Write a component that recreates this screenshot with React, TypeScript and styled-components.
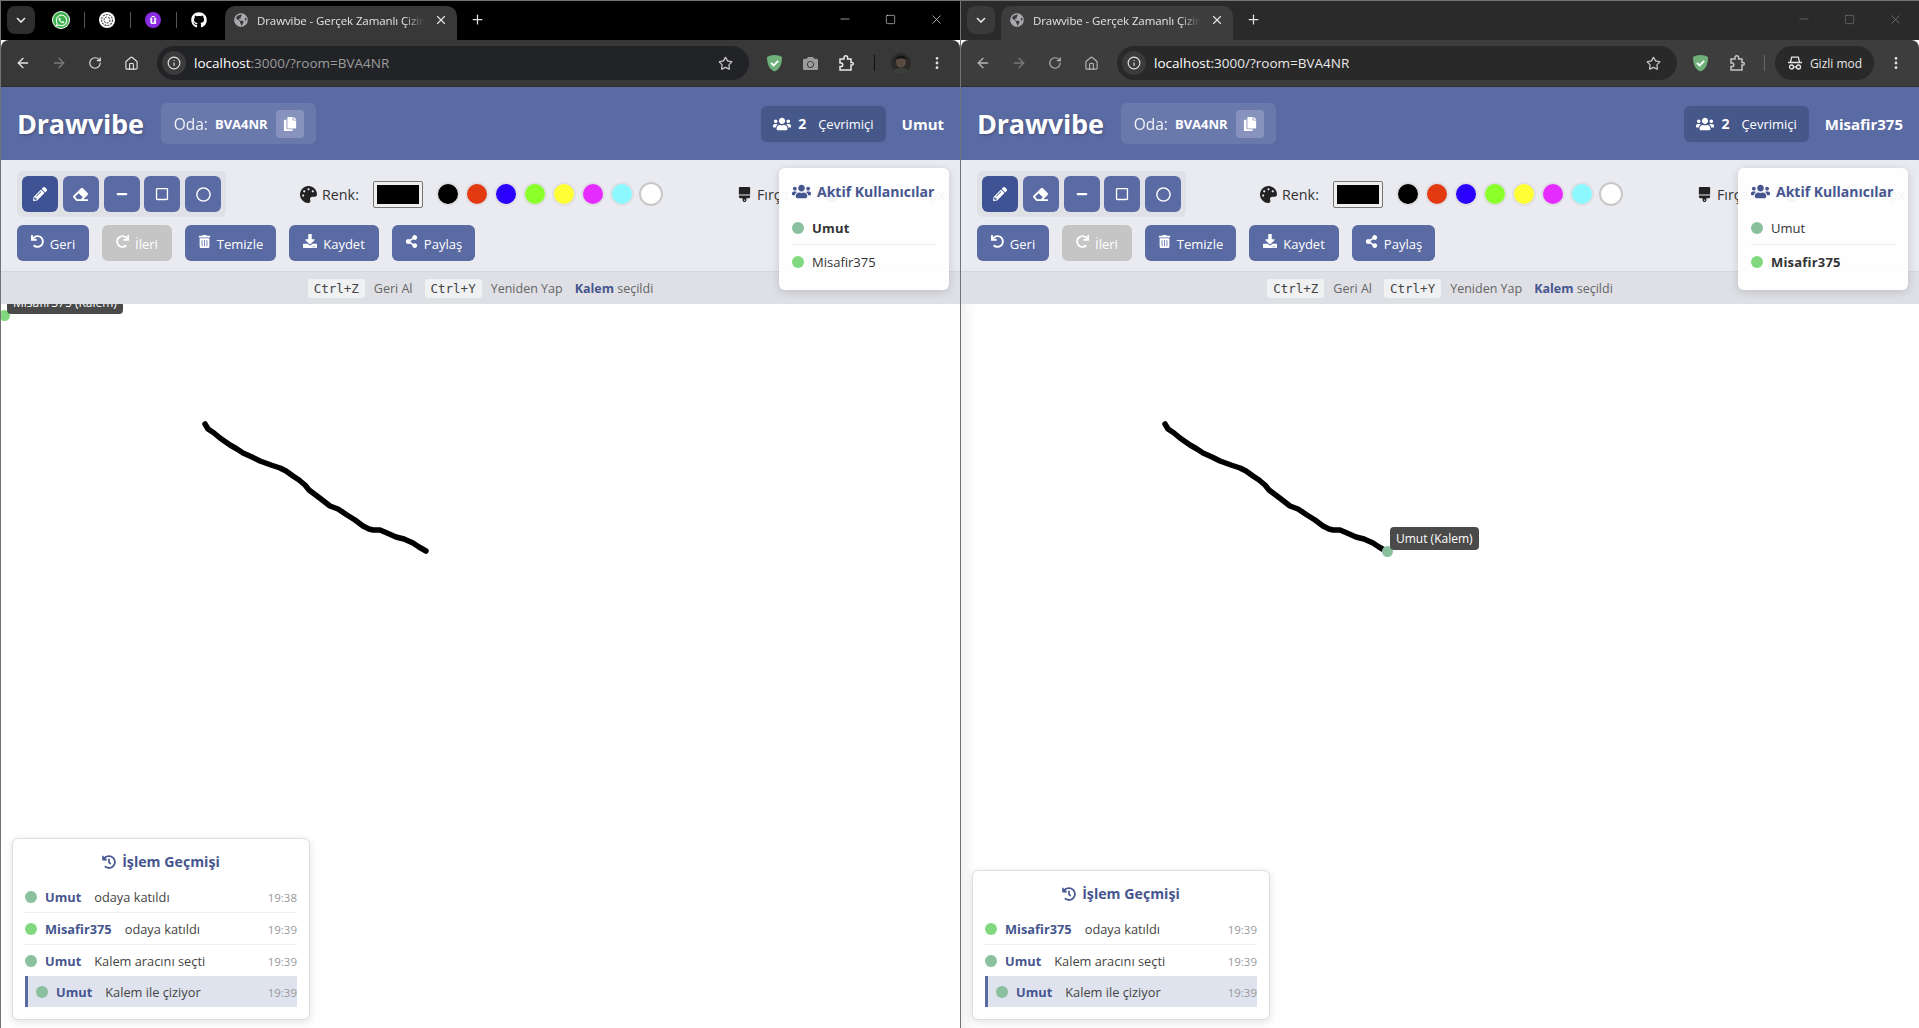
import { ReactNode } from "react";
import styled, { createGlobalStyle } from "styled-components";
import {
  FaBrush,
  FaCamera,
  FaCopy,
  FaDownload,
  FaEraser,
  FaGithub,
  FaGlobeAmericas,
  FaHistory,
  FaMinus,
  FaPalette,
  FaPencilAlt,
  FaRedo,
  FaRegCircle,
  FaRegSquare,
  FaShareAlt,
  FaTrashAlt,
  FaUndo,
  FaUsers,
  FaWhatsapp,
} from "react-icons/fa";
import { ArrowLeft, ArrowRight, EllipsisVertical, House, Info, Minus, Plus, RotateCw, Square, Star, X } from "lucide-react";

const UMUT = "#8bc09f";
const MISAFIR = "#80d97f";
const BLUE = "#5a6aa3";
const DARK_BLUE = "#46568f";
const UI_FONT = `"Open Sans", "Noto Sans", sans-serif`;

const SWATCHES = ["#000000", "#e43a12", "#2b00ff", "#8aff29", "#ffff33", "#e62bff", "#8cf8ff", "#ffffff"];

const STROKE =
  "204,120 207,125 213,129 219,134 229,141 236,145 242,149 251,153 259,157 270,161 279,164 285,167 292,172 298,176 304,181 308,186 312,189 320,195 329,202 337,205 346,211 354,216 362,222 368,225 372,226 379,226 386,229 395,233 403,235 412,239 418,243 425,247";

type LogItem = { who: string; what: string; time: string; current?: boolean };

const LEFT_LOG: LogItem[] = [
  { who: "Umut", what: "odaya katıldı", time: "19:38" },
  { who: "Misafir375", what: "odaya katıldı", time: "19:39" },
  { who: "Umut", what: "Kalem aracını seçti", time: "19:39" },
  { who: "Umut", what: "Kalem ile çiziyor", time: "19:39", current: true },
];

const RIGHT_LOG: LogItem[] = LEFT_LOG.slice(1);

const colorOf = (name: string) => (name === "Umut" ? UMUT : MISAFIR);

const ShieldIcon = () => (
  <svg width="17" height="18" viewBox="0 0 17 18">
    <path d="M8.5 1C5.5 1 3 1.8 1 3c0 7 2 12 7.5 14.500C14 15 16 10 16 3c-2-1.200-4.500-2-7.500-2z" fill="#6fb07a" />
    <path d="M5 8.800l2.600 2.600L12.200 6.800" fill="none" stroke="#fff" strokeWidth="1.800" />
  </svg>
);

const PuzzleIcon = ({ color }: { color: string }) => (
  <svg width="18" height="18" viewBox="0 0 18 18" fill="none" stroke={color} strokeWidth="1.500">
    <path d="M2 5h4V3.500a1.800 1.800 0 0 1 3.600 0V5h3.400v3.400h1a1.300 1.300 0 0 1 0 2.600h-1v5H2v-3.500h1a1.800 1.800 0 0 0 0-3.600H2z" />
  </svg>
);

const IncognitoIcon = () => (
  <svg width="16" height="16" viewBox="0 0 16 16" fill="none" stroke="#e6e6e6" strokeWidth="1.300">
    <path d="M1 7.500h14M3.500 7l1.200-4.800h6.600L12.500 7" />
    <circle cx="4.500" cy="12" r="2" />
    <circle cx="11.500" cy="12" r="2" />
    <path d="M6.500 12h3" />
  </svg>
);

const AvatarIcon = () => (
  <svg width="20" height="20" viewBox="0 0 20 20">
    <circle cx="10" cy="10" r="10" fill="#2b2a29" />
    <ellipse cx="10" cy="9" rx="5" ry="5.500" fill="#5b4b42" />
    <path d="M4 7c1-5 11-6 12 0-3-2-9-2-12 0z" fill="#141414" />
    <path d="M2 18c3-4 13-4 16 0l-4 2H6z" fill="#3c3f3c" />
  </svg>
);

const SwirlIcon = () => (
  <svg width="16" height="16" viewBox="0 0 16 16">
    <circle cx="8" cy="8" r="8" fill="#fff" />
    <circle cx="8" cy="8" r="5.500" fill="none" stroke="#555" strokeWidth="1.200" strokeDasharray="2 1" />
    <circle cx="8" cy="8" r="3" fill="none" stroke="#555" strokeWidth="1.200" strokeDasharray="2 1" />
  </svg>
);

const BrowserChrome = ({ incognito }: { incognito: boolean }) => (
  <>
    <TabStrip $incognito={incognito}>
      <TabToggle $incognito={incognito}>
        <svg width="10" height="6" viewBox="0 0 10 6" fill="none" stroke="#e6e6e6" strokeWidth="1.600">
          <path d="M1 1l4 4 4-4" />
        </svg>
      </TabToggle>
      {!incognito && (
        <Pinned>
          <PinnedIcon>
            <WhatsappBadge>
              <FaWhatsapp size={13} color="#fff" />
            </WhatsappBadge>
          </PinnedIcon>
          <PinSeparator />
          <PinnedIcon>
            <SwirlIcon />
          </PinnedIcon>
          <PinSeparator />
          <PinnedIcon>
            <PurpleBadge>û</PurpleBadge>
          </PinnedIcon>
          <PinSeparator />
          <PinnedIcon>
            <FaGithub size={16} color="#fff" />
          </PinnedIcon>
        </Pinned>
      )}
      <Tab $incognito={incognito}>
        <FaGlobeAmericas size={14} color="#a9abae" />
        <TabTitle>Drawvibe - Gerçek Zamanlı Çizim</TabTitle>
        <X size={14} color="#e3e3e3" strokeWidth={2} />
      </Tab>
      <NewTab>
        <Plus size={15} color="#e3e3e3" strokeWidth={2} />
      </NewTab>
      <WindowControls>
        <Minus size={14} color={incognito ? "#888" : "#fff"} strokeWidth={1} />
        <Square size={11} color={incognito ? "#888" : "#fff"} strokeWidth={1.200} />
        <X size={15} color={incognito ? "#888" : "#fff"} strokeWidth={1} />
      </WindowControls>
    </TabStrip>
    <NavBar $incognito={incognito}>
      <NavIcon>
        <ArrowLeft size={16} color={incognito ? "#b5b5b5" : "#e3e3e3"} strokeWidth={2} />
      </NavIcon>
      <NavIcon>
        <ArrowRight size={16} color="#7a7a7a" strokeWidth={2} />
      </NavIcon>
      <NavIcon>
        <RotateCw size={14} color={incognito ? "#b5b5b5" : "#e3e3e3"} strokeWidth={2} />
      </NavIcon>
      <NavIcon>
        <House size={15} color={incognito ? "#b5b5b5" : "#e3e3e3"} strokeWidth={1.800} />
      </NavIcon>
      <AddressBar $incognito={incognito}>
        <SiteInfo>
          <Info size={14} color="#e3e3e3" strokeWidth={2} />
        </SiteInfo>
        <Url $incognito={incognito}>
          <b>localhost</b>:3000/?room=BVA4NR
        </Url>
        <Star size={15} color="#c7c7c7" strokeWidth={2} />
      </AddressBar>
      <Extensions $incognito={incognito}>
        <ShieldIcon />
        {!incognito && <FaCamera size={15} color="#9c9c9c" />}
        <PuzzleIcon color={incognito ? "#c4c4c4" : "#e8e8e8"} />
        <ExtSeparator $incognito={incognito} />
        {incognito ? (
          <IncognitoPill>
            <IncognitoIcon />
            Gizli mod
          </IncognitoPill>
        ) : (
          <Avatar>
            <AvatarIcon />
          </Avatar>
        )}
        <EllipsisVertical size={16} color="#e3e3e3" strokeWidth={2.200} />
      </Extensions>
    </NavBar>
  </>
);

const ToolButtons = () => (
  <ShapeGroup>
    <ShapeButton $active>
      <FaPencilAlt size={14} />
    </ShapeButton>
    <ShapeButton>
      <FaEraser size={15} />
    </ShapeButton>
    <ShapeButton>
      <FaMinus size={12} />
    </ShapeButton>
    <ShapeButton>
      <FaRegSquare size={14} />
    </ShapeButton>
    <ShapeButton>
      <FaRegCircle size={15} />
    </ShapeButton>
  </ShapeGroup>
);

const ActionButton = ({
  icon,
  label,
  width,
  disabled,
}: {
  icon: ReactNode;
  label: string;
  width: number;
  disabled?: boolean;
}) => (
  <Action $width={width} $disabled={disabled}>
    {icon}
    <span>{label}</span>
  </Action>
);

const DrawApp = ({
  user,
  log,
  cursor,
  shaded,
}: {
  user: string;
  log: LogItem[];
  cursor: { name: string; x: number; y: number };
  shaded?: boolean;
}) => (
  <Page>
    <Header>
      <HeaderLeft>
        <Logo>Drawvibe</Logo>
        <RoomBox>
          <RoomLabel>Oda:</RoomLabel>
          <RoomCode>BVA4NR</RoomCode>
          <CopyButton>
            <FaCopy size={14} />
          </CopyButton>
        </RoomBox>
      </HeaderLeft>
      <HeaderRight>
        <OnlinePill>
          <FaUsers size={18} />
          <OnlineCount>2</OnlineCount>
          <span>Çevrimiçi</span>
        </OnlinePill>
        <UserName>{user}</UserName>
      </HeaderRight>
    </Header>

    <Toolbar>
      <ToolRow>
        <ToolButtons />
        <Control>
          <FaPalette size={17} color="#222" />
          <ControlLabel>Renk:</ControlLabel>
          <ColorInput>
            <span />
          </ColorInput>
          <Swatches>
            {SWATCHES.map((c) => (
              <Swatch key={c} $color={c} $white={c === "#ffffff"} />
            ))}
          </Swatches>
        </Control>
        <BrushControl>
          <FaBrush size={15} color="#222" />
          <ControlLabel>Fırça:</ControlLabel>
          <Slider>
            <SliderThumb />
          </Slider>
          <SizeValue>3px</SizeValue>
        </BrushControl>
      </ToolRow>
      <ActionRow>
        <ActionButton icon={<FaUndo size={13} />} label="Geri" width={72} />
        <ActionButton icon={<FaRedo size={13} />} label="İleri" width={70} disabled />
        <ActionButton icon={<FaTrashAlt size={13} />} label="Temizle" width={91} />
        <ActionButton icon={<FaDownload size={14} />} label="Kaydet" width={90} />
        <ActionButton icon={<FaShareAlt size={13} />} label="Paylaş" width={83} />
      </ActionRow>
    </Toolbar>

    <ShortcutBar>
      <Kbd>Ctrl+Z</Kbd>
      <ShortcutText>Geri Al</ShortcutText>
      <Kbd>Ctrl+Y</Kbd>
      <ShortcutText>Yeniden Yap</ShortcutText>
      <ToolStatus>
        <b>Kalem</b> seçildi
      </ToolStatus>
    </ShortcutBar>

    <UsersPanel>
      <UsersTitle>
        <FaUsers size={19} />
        Aktif Kullanıcılar
      </UsersTitle>
      {["Umut", "Misafir375"].map((name) => (
        <UserRow key={name}>
          <Dot $color={colorOf(name)} />
          <UserRowName $self={name === user}>{name}</UserRowName>
        </UserRow>
      ))}
    </UsersPanel>

    <Canvas $shaded={shaded}>
      <Drawing>
        <polyline points={STROKE} fill="none" stroke="#000" strokeWidth="5.5" strokeLinecap="round" strokeLinejoin="round" />
      </Drawing>
      <Cursor $x={cursor.x} $y={cursor.y} $color={colorOf(cursor.name)}>
        <CursorTip>{cursor.name} (Kalem)</CursorTip>
      </Cursor>
      <HistoryPanel>
        <HistoryTitle>
          <FaHistory size={14} />
          İşlem Geçmişi
        </HistoryTitle>
        {log.map((item, i) => (
          <HistoryRow key={i} $current={item.current}>
            <Dot $color={colorOf(item.who)} />
            <HistoryWho>{item.who}</HistoryWho>
            <HistoryWhat>{item.what}</HistoryWhat>
            <HistoryTime>{item.time}</HistoryTime>
          </HistoryRow>
        ))}
      </HistoryPanel>
    </Canvas>
  </Page>
);

export default function App() {
  return (
    <>
      <GlobalStyle />
      <Desktop>
        <BrowserWindow $first>
          <BrowserChrome incognito={false} />
          <DrawApp user="Umut" log={LEFT_LOG} cursor={{ name: "Misafir375", x: 3, y: 11 }} />
        </BrowserWindow>
        <BrowserWindow>
          <BrowserChrome incognito />
          <DrawApp user="Misafir375" log={RIGHT_LOG} cursor={{ name: "Umut", x: 426, y: 247 }} shaded />
        </BrowserWindow>
      </Desktop>
    </>
  );
}

const GlobalStyle = createGlobalStyle`
  html, body {
    margin: 0;
    padding: 0;
    background: #fff;
    overflow: hidden;
  }
  * {
    box-sizing: border-box;
  }
`;

const Desktop = styled.div`
  display: grid;
  grid-template-columns: 961px 958px;
  width: 1919px;
  height: 1028px;
  font-family: ${UI_FONT};
`;

const BrowserWindow = styled.div<{ $first?: boolean }>`
  display: flex;
  flex-direction: column;
  min-width: 0;
  height: 1028px;
  overflow: hidden;
  border-top: 1px solid #737373;
  border-left: ${(p) => (p.$first ? "1px solid #737373" : "0")};
  border-right: ${(p) => (p.$first ? "1px solid #737373" : "0")};
`;

const TabStrip = styled.div<{ $incognito: boolean }>`
  display: flex;
  align-items: flex-end;
  height: 39px;
  flex: none;
  padding-left: 6px;
  background: ${(p) => (p.$incognito ? "#2a2a2a" : "#000")};
`;

const TabToggle = styled.div<{ $incognito: boolean }>`
  display: flex;
  align-items: center;
  justify-content: center;
  width: 28px;
  height: 28px;
  margin-bottom: 6px;
  border-radius: 8px;
  background: ${(p) => (p.$incognito ? "#3a3a3a" : "#2e2e2e")};
`;

const Pinned = styled.div`
  display: flex;
  align-items: center;
  height: 28px;
  margin-bottom: 6px;
  margin-left: 7px;
`;

const PinnedIcon = styled.div`
  display: flex;
  align-items: center;
  justify-content: center;
  width: 38px;
`;

const PinSeparator = styled.div`
  width: 1px;
  height: 16px;
  margin: 0 3.500px;
  background: #555;
`;

const WhatsappBadge = styled.div`
  display: flex;
  align-items: center;
  justify-content: center;
  width: 16px;
  height: 16px;
  border-radius: 50%;
  background: #3fb24f;
  box-shadow: 0 0 0 1px #fff;
`;

const PurpleBadge = styled.div`
  width: 16px;
  height: 16px;
  border-radius: 50%;
  background: #8b2be2;
  color: #fff;
  font-size: 11px;
  font-weight: 700;
  line-height: 15px;
  text-align: center;
`;

const Tab = styled.div<{ $incognito: boolean }>`
  display: flex;
  align-items: center;
  gap: 9px;
  width: 232px;
  height: 34px;
  margin-left: ${(p) => (p.$incognito ? "6px" : "7px")};
  padding: 0 9px 6px;
  border-radius: 10px 10px 0 0;
  background: ${(p) => (p.$incognito ? "#3d3d3d" : "#383838")};
`;

const TabTitle = styled.div`
  flex: 1;
  overflow: hidden;
  white-space: nowrap;
  font-size: 11.500px;
  letter-spacing: -0.1px;
  color: #e3e3e3;
  -webkit-mask-image: linear-gradient(to right, #000 88%, transparent);
  mask-image: linear-gradient(to right, #000 88%, transparent);
`;

const NewTab = styled.div`
  display: flex;
  align-items: center;
  justify-content: center;
  width: 28px;
  height: 28px;
  margin-left: 6px;
  margin-bottom: 7px;
`;

const WindowControls = styled.div`
  display: flex;
  align-items: center;
  justify-content: space-around;
  width: 138px;
  height: 30px;
  margin-left: auto;
  margin-bottom: 6px;
`;

const NavBar = styled.div<{ $incognito: boolean }>`
  display: flex;
  align-items: center;
  height: 46px;
  flex: none;
  padding: 0 0 0 4px;
  border-radius: 8px 8px 0 0;
  background: ${(p) => (p.$incognito ? "#3d3d3d" : "#383838")};
`;

const NavIcon = styled.div`
  display: flex;
  align-items: center;
  justify-content: center;
  width: 36px;
  height: 34px;
`;

const AddressBar = styled.div<{ $incognito: boolean }>`
  display: flex;
  align-items: center;
  flex: 1;
  height: 34px;
  margin-left: 8px;
  padding: 0 16px 0 5px;
  border-radius: 17px;
  background: ${(p) => (p.$incognito ? "#292929" : "#222327")};
`;

const SiteInfo = styled.div`
  display: flex;
  align-items: center;
  justify-content: center;
  width: 24px;
  height: 24px;
  border-radius: 50%;
  background: #3b3b3b;
`;

const Url = styled.div<{ $incognito: boolean }>`
  flex: 1;
  margin-left: 8px;
  font-size: 13.500px;
  color: ${(p) => (p.$incognito ? "#e8e8e8" : "#9c9c9c")};
  b {
    font-weight: 400;
    color: #fff;
  }
`;

const Extensions = styled.div<{ $incognito: boolean }>`
  display: flex;
  align-items: center;
  gap: 20px;
  padding: 0 15px 0 ${(p) => (p.$incognito ? "14.500px" : "17px")};
`;

const ExtSeparator = styled.div<{ $incognito: boolean }>`
  width: 1px;
  height: 16px;
  margin-left: -2.500px;
  margin-right: ${(p) => (p.$incognito ? "-10px" : "-3.500px")};
  background: ${(p) => (p.$incognito ? "#666" : "#111")};
`;

const Avatar = styled.div`
  display: flex;
  margin-right: -2px;
`;

const IncognitoPill = styled.div`
  display: flex;
  align-items: center;
  justify-content: center;
  gap: 7px;
  width: 99px;
  height: 34px;
  margin-right: -6px;
  border-radius: 17px;
  background: #292929;
  color: #e6e6e6;
  font-size: 12px;
`;

const Page = styled.div`
  position: relative;
  display: flex;
  flex-direction: column;
  flex: 1;
  min-height: 0;
  border-top: 1px solid #2e2e2e;
`;

const Header = styled.header`
  display: flex;
  align-items: center;
  justify-content: space-between;
  height: 73px;
  flex: none;
  padding: 0 16px;
  background: ${BLUE};
  color: #fff;
`;

const HeaderLeft = styled.div`
  display: flex;
  align-items: center;
  gap: 17px;
`;

const Logo = styled.div`
  font-size: 27px;
  font-weight: 700;
  letter-spacing: -0.2px;
  text-shadow: 1px 1px 3px rgba(0, 0, 0, 0.25);
`;

const RoomBox = styled.div`
  display: flex;
  align-items: center;
  height: 41px;
  padding: 0 12px 0 13px;
  border-radius: 6px;
  background: rgba(255, 255, 255, 0.1);
`;

const RoomLabel = styled.span`
  font-size: 15.500px;
  opacity: 0.9;
`;

const RoomCode = styled.span`
  margin-left: 7px;
  font-size: 13px;
  font-weight: 700;
`;

const CopyButton = styled.div`
  display: flex;
  align-items: center;
  justify-content: center;
  width: 28px;
  height: 28px;
  margin-left: 8px;
  border-radius: 4px;
  background: rgba(255, 255, 255, 0.2);
`;

const HeaderRight = styled.div`
  display: flex;
  align-items: center;
  gap: 16px;
`;

const OnlinePill = styled.div`
  display: flex;
  align-items: center;
  height: 36px;
  padding: 0 12px;
  border-radius: 6px;
  background: #46578a;
  font-size: 13px;
`;

const OnlineCount = styled.b`
  margin: 0 12px 0 7px;
  font-size: 14px;
`;

const UserName = styled.div`
  font-size: 15px;
  font-weight: 700;
`;

const Toolbar = styled.div`
  display: flex;
  flex-direction: column;
  gap: 8px;
  height: 112px;
  flex: none;
  padding: 11px 0 0 16px;
  overflow: hidden;
  background: #e9ebf0;
  border-bottom: 1px solid #d5d6db;
`;

const ToolRow = styled.div`
  display: flex;
  align-items: center;
  gap: 74px;
  flex-wrap: nowrap;
`;

const ShapeGroup = styled.div`
  display: flex;
  gap: 4.750px;
  padding: 5px;
  border-radius: 6px;
  background: #dfe1e6;
`;

const ShapeButton = styled.div<{ $active?: boolean }>`
  display: flex;
  align-items: center;
  justify-content: center;
  width: 36px;
  height: 36px;
  border-radius: 6px;
  color: #fff;
  background: ${(p) => (p.$active ? "#3f5394" : BLUE)};
`;

const Control = styled.div`
  display: flex;
  align-items: center;
  flex: none;
`;

const ControlLabel = styled.span`
  margin-left: 5px;
  font-size: 14.300px;
  color: #333;
`;

const ColorInput = styled.div`
  width: 50px;
  height: 27px;
  margin-left: 14px;
  padding: 3px;
  border: 1px solid #767676;
  border-radius: 2px;
  background: #efefef;
  span {
    display: block;
    height: 100%;
    background: #000;
  }
`;

const Swatches = styled.div`
  display: flex;
  gap: 5px;
  margin-left: 13px;
`;

const Swatch = styled.div<{ $color: string; $white: boolean }>`
  width: 24px;
  height: 24px;
  border-radius: 50%;
  background: ${(p) => p.$color};
  border: 2px solid ${(p) => (p.$white ? "#c8c8c8" : "#e0e0e4")};
`;

const BrushControl = styled.div`
  display: flex;
  align-items: center;
  flex: none;
`;

const Slider = styled.div`
  position: relative;
  width: 108px;
  height: 6px;
  margin-left: 8px;
  border-radius: 3px;
  background: #d6d8e6;
`;

const SliderThumb = styled.div`
  position: absolute;
  top: -5px;
  left: 24px;
  width: 16px;
  height: 16px;
  border-radius: 50%;
  background: ${BLUE};
`;

const SizeValue = styled.span`
  margin-left: 13px;
  font-size: 14px;
  color: #333;
`;

const ActionRow = styled.div`
  display: flex;
  gap: 13px;
`;

const Action = styled.div<{ $width: number; $disabled?: boolean }>`
  display: flex;
  align-items: center;
  justify-content: center;
  gap: 6px;
  width: ${(p) => p.$width}px;
  height: 36px;
  border-radius: 6px;
  font-size: 13px;
  color: #fff;
  background: ${(p) => (p.$disabled ? "#c5c5c5" : BLUE)};
  svg {
    margin-top: -4px;
  }
  span {
    margin-top: 1px;
  }
`;

const ShortcutBar = styled.div`
  display: flex;
  align-items: center;
  justify-content: center;
  height: 32px;
  flex: none;
  padding-top: 1px;
  background: #dfe0e5;
  font-size: 12.500px;
  color: #666;
`;

const Kbd = styled.kbd`
  display: block;
  height: 19px;
  padding: 0 6px;
  border-radius: 3px;
  background: #f0f1f3;
  font-family: "DejaVu Sans Mono", "Liberation Mono", monospace;
  font-size: 12.500px;
  line-height: 20px;
  color: #444;
`;

const ShortcutText = styled.span`
  margin: 0 12px 0 9px;
`;

const ToolStatus = styled.span`
  b {
    color: ${DARK_BLUE};
  }
`;

const UsersPanel = styled.aside`
  position: absolute;
  top: 81px;
  right: 11px;
  z-index: 3;
  width: 170px;
  height: 122px;
  padding: 13px;
  border-radius: 6px;
  background: rgba(255, 255, 255, 0.95);
  box-shadow: 0 2px 10px rgba(0, 0, 0, 0.15);
`;

const UsersTitle = styled.div`
  display: flex;
  align-items: center;
  gap: 6px;
  height: 20px;
  margin-bottom: 10px;
  font-size: 14px;
  font-weight: 700;
  white-space: nowrap;
  color: ${DARK_BLUE};
`;

const UserRow = styled.div`
  display: flex;
  align-items: center;
  gap: 8px;
  height: 34px;
  border-bottom: 1px solid #eee;
  &:last-child {
    border-bottom: 0;
  }
`;

const Dot = styled.span<{ $color: string }>`
  flex: none;
  width: 12px;
  height: 12px;
  border-radius: 50%;
  background: ${(p) => p.$color};
`;

const UserRowName = styled.span<{ $self: boolean }>`
  font-size: 13px;
  font-weight: ${(p) => (p.$self ? 700 : 400)};
  letter-spacing: ${(p) => (p.$self ? "0.2px" : "0")};
  color: #333;
`;

const Canvas = styled.main<{ $shaded?: boolean }>`
  position: relative;
  flex: 1;
  min-height: 0;
  overflow: hidden;
  background: #fff;
  box-shadow: ${(p) => (p.$shaded ? "inset 14px 0 14px -10px rgba(0, 0, 0, 0.08)" : "none")};
`;

const Drawing = styled.svg`
  position: absolute;
  inset: 0;
  width: 100%;
  height: 100%;
`;

const Cursor = styled.div<{ $x: number; $y: number; $color: string }>`
  position: absolute;
  left: ${(p) => p.$x - 5}px;
  top: ${(p) => p.$y - 5}px;
  width: 11px;
  height: 11px;
  border-radius: 50%;
  background: ${(p) => p.$color};
`;

const CursorTip = styled.div`
  position: absolute;
  left: 8px;
  bottom: 7px;
  padding: 3px 6px;
  border-radius: 4px;
  white-space: nowrap;
  background: #4a4a4a;
  color: #fff;
  font-size: 12px;
  line-height: 17px;
`;

const HistoryPanel = styled.section`
  position: absolute;
  left: 11px;
  bottom: 8px;
  width: 298px;
  padding: 12px;
  border: 1px solid #ddd;
  border-radius: 6px;
  background: #fff;
  box-shadow: 0 2px 8px rgba(0, 0, 0, 0.12);
`;

const HistoryTitle = styled.div`
  display: flex;
  align-items: center;
  justify-content: center;
  gap: 6px;
  height: 24px;
  margin-bottom: 6px;
  padding-bottom: 3px;
  font-size: 14.200px;
  font-weight: 700;
  color: ${DARK_BLUE};
`;

const HistoryRow = styled.div<{ $current?: boolean }>`
  display: flex;
  align-items: center;
  height: 32px;
  padding: 1px 0 0 ${(p) => (p.$current ? "8px" : "0")};
  border-left: ${(p) => (p.$current ? `3px solid ${BLUE}` : "0")};
  border-bottom: 1px solid #eee;
  background: ${(p) => (p.$current ? "#dfe3ee" : "transparent")};
  font-size: 12.800px;
  &:last-child {
    height: 31px;
    margin-top: -1px;
    border-bottom: 0;
  }
`;

const HistoryWho = styled.b`
  margin-left: 8px;
  color: ${DARK_BLUE};
`;

const HistoryWhat = styled.span`
  margin-left: 13px;
  color: #444;
`;

const HistoryTime = styled.span`
  margin-left: auto;
  font-size: 11.500px;
  color: #999;
`;
